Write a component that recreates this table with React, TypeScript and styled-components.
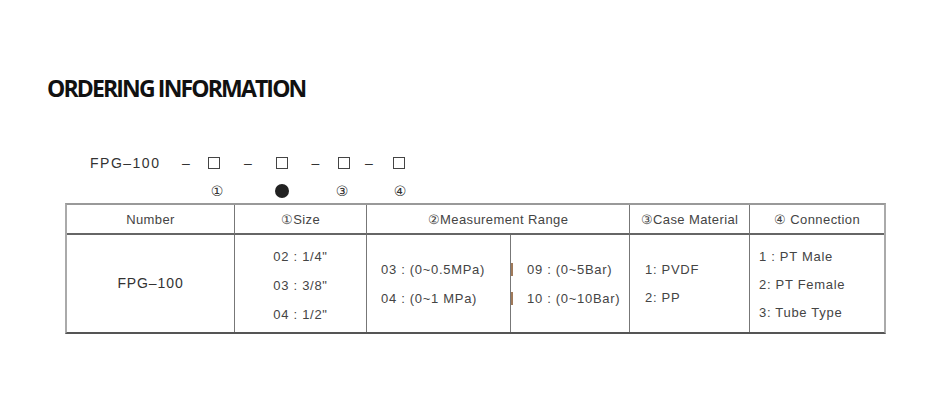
import styled, { createGlobalStyle } from "styled-components";

const GlobalStyle = createGlobalStyle`
  html, body {
    margin: 0;
    padding: 0;
    background: #ffffff;
  }
  body {
    width: 939px;
    height: 418px;
    overflow: hidden;
    font-family: "Liberation Sans", Arial, sans-serif;
  }
`;

const Page = styled.div`
  display: flex;
  flex-direction: column;
  padding: 73px 0 0 47px;
`;

const Title = styled.h1`
  margin: 0;
  font-family: "Open Sans", sans-serif;
  font-weight: 700;
  font-size: 23px;
  line-height: 30px;
  letter-spacing: -1.85px;
  color: #111;
`;

const CodeLine = styled.div`
  display: flex;
  align-items: center;
  height: 20px;
  margin: 50px 0 0 43px;
  font-size: 14px;
  color: #333;
`;

const Seg = styled.span<{ $w: number }>`
  display: flex;
  justify-content: center;
  align-items: center;
  width: ${(p) => p.$w}px;
  flex: none;
`;

const Label = styled.span`
  width: 85px;
  flex: none;
  letter-spacing: 1.5px;
`;

const Box = styled.span`
  display: inline-block;
  width: 10px;
  height: 10px;
  border: 1.5px solid #444;
`;

const MarkLine = styled.div`
  display: flex;
  align-items: center;
  height: 20px;
  margin: 8px 0 0 43px;
  font-family: "DejaVu Sans", sans-serif;
  font-size: 14px;
  color: #333;
`;

const Dot = styled.span`
  display: inline-block;
  flex: none;
  width: 14px;
  height: 14px;
  border-radius: 50%;
  background: #222;
`;

const Table = styled.div`
  display: grid;
  grid-template-columns: 168px 132px 144px 119px 120px 134px;
  grid-template-rows: 30px 97px;
  width: 817px;
  margin: 2px 0 0 18px;
  border-top: 2px solid #999;
  border-left: 2px solid #aaa;
  border-right: 2px solid #aaa;
  border-bottom: 2px solid #555;
  font-size: 13px;
  letter-spacing: 0.7px;
  color: #444;
`;

const Head = styled.div<{ $span?: number; $last?: boolean }>`
  grid-column: span ${(p) => p.$span ?? 1};
  display: flex;
  justify-content: center;
  align-items: center;
  border-bottom: 2px solid #666;
  border-right: ${(p) => (p.$last ? "none" : "1px solid #777")};
  white-space: nowrap;
  letter-spacing: 0.4px;
`;

const Cell = styled.div<{
  $last?: boolean;
  $align?: "center" | "left";
  $pad?: number;
  $gap: number;
  $top: number;
}>`
  display: flex;
  flex-direction: column;
  align-items: ${(p) => (p.$align === "left" ? "flex-start" : "center")};
  gap: ${(p) => p.$gap}px;
  padding: ${(p) => p.$top}px 0 0 ${(p) => p.$pad ?? 0}px;
  border-right: ${(p) => (p.$last ? "none" : "1px solid #777")};
  white-space: nowrap;
  line-height: 15px;
`;

const Centered = styled.div`
  display: flex;
  justify-content: center;
  align-items: center;
  border-right: 1px solid #777;
  font-size: 14px;
  letter-spacing: 0.9px;
  color: #333;
  padding-bottom: 2px;
`;

const Tick = styled.span`
  display: inline-block;
  width: 2px;
  height: 13px;
  margin-right: 14px;
  background: #a07a5a;
`;

const RangeRow = styled.span`
  display: flex;
  align-items: center;
  margin-left: -16px;
`;

export default function App() {
  return (
    <>
      <GlobalStyle />
      <Page>
        <Title>ORDERING INFORMATION</Title>
        <CodeLine>
          <Label>FPG–100</Label>
          <Seg $w={22}>–</Seg>
          <Seg $w={34}>
            <Box />
          </Seg>
          <Seg $w={34}>–</Seg>
          <Seg $w={34}>
            <Box />
          </Seg>
          <Seg $w={33}>–</Seg>
          <Seg $w={24}>
            <Box />
          </Seg>
          <Seg $w={26}>–</Seg>
          <Seg $w={34}>
            <Box />
          </Seg>
        </CodeLine>
        <MarkLine>
          <Label />
          <Seg $w={84}>①</Seg>
          <Seg $w={46}>
            <Dot />
          </Seg>
          <Seg $w={74}>③</Seg>
          <Seg $w={42}>④</Seg>
        </MarkLine>
        <Table>
          <Head>Number</Head>
          <Head>①Size</Head>
          <Head $span={2}>②Measurement Range</Head>
          <Head>③Case Material</Head>
          <Head $last>④ Connection</Head>

          <Centered>FPG–100</Centered>
          <Cell $gap={14} $top={14}>
            <span>02 : 1/4"</span>
            <span>03 : 3/8"</span>
            <span>04 : 1/2"</span>
          </Cell>
          <Cell $align="left" $pad={14} $gap={14} $top={27}>
            <span>03 : (0~0.5MPa)</span>
            <span>04 : (0~1 MPa)</span>
          </Cell>
          <Cell $align="left" $pad={16} $gap={14} $top={27}>
            <RangeRow>
              <Tick />
              09 : (0~5Bar)
            </RangeRow>
            <RangeRow>
              <Tick />
              10 : (0~10Bar)
            </RangeRow>
          </Cell>
          <Cell $align="left" $pad={15} $gap={13} $top={27}>
            <span>1: PVDF</span>
            <span>2: PP</span>
          </Cell>
          <Cell $last $align="left" $pad={9} $gap={13} $top={14}>
            <span>1 : PT Male</span>
            <span>2: PT Female</span>
            <span>3: Tube Type</span>
          </Cell>
        </Table>
      </Page>
    </>
  );
}
